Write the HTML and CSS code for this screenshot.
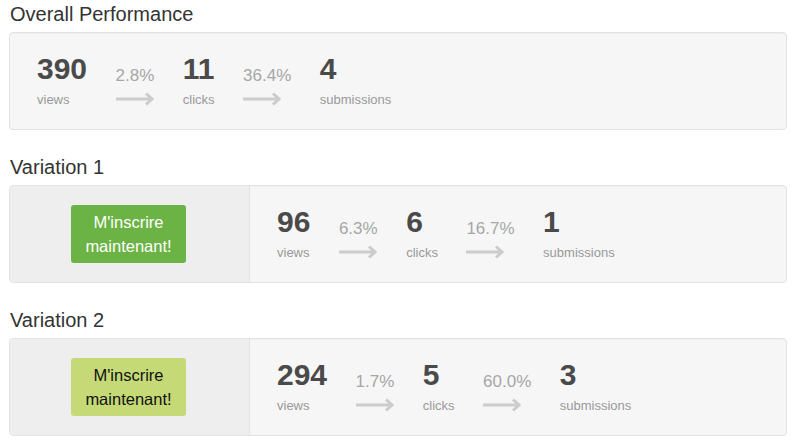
FILE: index.html
```html
<!DOCTYPE html>
<html lang="en">
<head>
  <meta charset="UTF-8">
  <meta name="viewport" content="width=device-width, initial-scale=1.0">
  <title>Split Test Results</title>
  <link rel="stylesheet" href="styles.css">
</head>
<body>
  <div class="page">

    <div class="section">
      <h3>Overall Performance</h3>
      <div class="well">
        <div class="funnel">
          <div class="stat">
            <div class="num">390</div>
            <div class="label">views</div>
          </div>
          <div class="rate">
            <div class="pct">2.8%</div>
            <svg class="arrow" width="38" height="14" viewBox="0 0 38 14"><path d="M0 7H35M30 1.5L36 7L30 12.5"/></svg>
          </div>
          <div class="stat">
            <div class="num">11</div>
            <div class="label">clicks</div>
          </div>
          <div class="rate">
            <div class="pct">36.4%</div>
            <svg class="arrow" width="38" height="14" viewBox="0 0 38 14"><path d="M0 7H35M30 1.5L36 7L30 12.5"/></svg>
          </div>
          <div class="stat">
            <div class="num">4</div>
            <div class="label">submissions</div>
          </div>
        </div>
      </div>
    </div>

    <div class="section">
      <h3>Variation 1</h3>
      <div class="well split">
        <div class="preview">
          <div class="cta cta-green">M'inscrire<br>maintenant!</div>
        </div>
        <div class="funnel">
          <div class="stat">
            <div class="num">96</div>
            <div class="label">views</div>
          </div>
          <div class="rate">
            <div class="pct">6.3%</div>
            <svg class="arrow" width="38" height="14" viewBox="0 0 38 14"><path d="M0 7H35M30 1.5L36 7L30 12.5"/></svg>
          </div>
          <div class="stat">
            <div class="num">6</div>
            <div class="label">clicks</div>
          </div>
          <div class="rate">
            <div class="pct">16.7%</div>
            <svg class="arrow" width="38" height="14" viewBox="0 0 38 14"><path d="M0 7H35M30 1.5L36 7L30 12.5"/></svg>
          </div>
          <div class="stat">
            <div class="num">1</div>
            <div class="label">submissions</div>
          </div>
        </div>
      </div>
    </div>

    <div class="section">
      <h3>Variation 2</h3>
      <div class="well split">
        <div class="preview">
          <div class="cta cta-lime">M'inscrire<br>maintenant!</div>
        </div>
        <div class="funnel">
          <div class="stat">
            <div class="num">294</div>
            <div class="label">views</div>
          </div>
          <div class="rate">
            <div class="pct">1.7%</div>
            <svg class="arrow" width="38" height="14" viewBox="0 0 38 14"><path d="M0 7H35M30 1.5L36 7L30 12.5"/></svg>
          </div>
          <div class="stat">
            <div class="num">5</div>
            <div class="label">clicks</div>
          </div>
          <div class="rate">
            <div class="pct">60.0%</div>
            <svg class="arrow" width="38" height="14" viewBox="0 0 38 14"><path d="M0 7H35M30 1.5L36 7L30 12.5"/></svg>
          </div>
          <div class="stat">
            <div class="num">3</div>
            <div class="label">submissions</div>
          </div>
        </div>
      </div>
    </div>

  </div>
</body>
</html>
```

FILE: styles.css
```css
body {
  margin: 0;
  font-family: "Liberation Sans", Arial, sans-serif;
  background-color: #ffffff;
  color: #333;
}
.page {
  padding: 3px 11px 0 9px;
}
.section {
  margin-bottom: 26px;
}
h3 {
  margin: 0 0 7px 1px;
  font-size: 20px;
  line-height: 22px;
  font-weight: normal;
  color: #333;
}
.well {
  display: flex;
  background-color: #f6f6f6;
  border: 1px solid #e3e3e3;
  border-radius: 4px;
  box-shadow: inset 0 1px 1px rgba(0, 0, 0, 0.03);
}
.split {
  overflow: hidden;
}
.preview {
  width: 239px;
  flex-shrink: 0;
  display: flex;
  justify-content: center;
  align-items: center;
  background-color: #eeeeee;
  border-right: 1px solid #e3e3e3;
}
.cta {
  padding: 5px 14px;
  border-radius: 3px;
  font-size: 16.5px;
  line-height: 24px;
  text-align: center;
  margin-left: -2px;
}
.cta-green {
  background-color: #6ab344;
  color: #fff;
}
.cta-lime {
  background-color: #c5da77;
  color: #111;
}
.funnel {
  display: flex;
  gap: 28.5px;
  padding: 21px 27px 20px;
}
.stat {
  display: flex;
  flex-direction: column;
}
.num {
  font-size: 30px;
  line-height: 30px;
  font-weight: bold;
  color: #4a4a4a;
}
.label {
  margin-top: 7px;
  font-size: 13px;
  line-height: 18px;
  color: #999;
}
.rate {
  display: flex;
  flex-direction: column;
  padding-top: 12px;
}
.pct {
  font-size: 17px;
  line-height: 20px;
  color: #a6a6a6;
}
.arrow {
  display: block;
  margin-top: 6px;
}
.arrow path {
  fill: none;
  stroke: #cccccc;
  stroke-width: 3;
}
```
